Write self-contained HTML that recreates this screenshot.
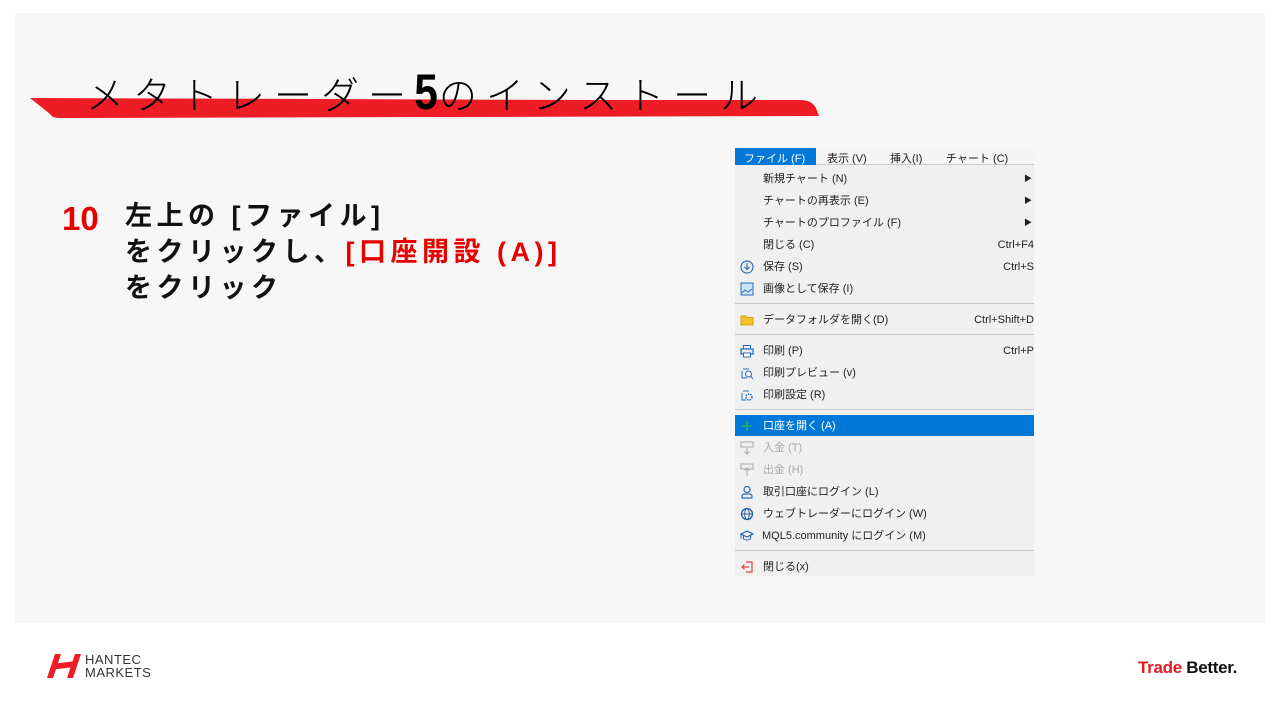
<!DOCTYPE html>
<html><head><meta charset="utf-8"><style>
*{margin:0;padding:0;box-sizing:border-box}
body{width:1280px;height:720px;background:#fff;position:relative;overflow:hidden;font-family:"Liberation Sans","Noto Sans CJK JP",sans-serif}
.panel{position:absolute;left:15px;top:13px;width:1250px;height:610px;background:#f7f7f7}
.title{position:absolute;left:86px;top:64px;font-size:38px;letter-spacing:9px;color:#000;white-space:nowrap;line-height:56px;font-weight:300}
.title b{font-size:50px;font-family:"Liberation Sans",sans-serif;font-weight:bold;letter-spacing:2px;display:inline-block;transform:scaleX(0.85);margin:0 -3px}
.num{position:absolute;left:62px;top:200px;font-size:33px;font-weight:bold;color:#e60000}
.txt{position:absolute;left:125px;top:198px;font-size:27px;font-weight:bold;letter-spacing:4.5px;line-height:36px;color:#111}
.red{color:#e60000}
.menu{position:absolute;left:735px;top:148px;width:299px;height:428px;background:#f0f0f0;font-size:11px;color:#222}
.bar{height:17px;background:#f5f5f5;border-bottom:1px solid #ccc;position:relative}
.bar span{position:absolute;top:2px}
.row{position:absolute;left:0;width:299px;height:22px;line-height:22px}
.row .l{position:absolute;left:28px}
.row .r{position:absolute;right:0}
.row .ar{position:absolute;right:2px;font-size:8px}
.row .ic{position:absolute;left:5px;top:4px;width:14px;height:14px}
.sep{position:absolute;left:0;width:299px;height:1px;background:#c8c8c8}
.dis{color:#aaa}
</style></head><body>
<div class="panel"></div>
<svg style="position:absolute;left:30px;top:96px" width="790" height="24"><path d="M0 2 L560 4 L770 4 Q782 4 786 12 L789 20 L30 22 Q22 22 20 18 Z" fill="#ee1c25"/></svg>
<div class="title">メタトレーダー<b>5</b>のインストール</div>
<div class="num">10</div>
<div class="txt">左上の [ファイル]<br>をクリックし、<span class="red">[口座開設 (A)]</span><br>をクリック</div>

<div class="menu">
<div class="bar"><div style="position:absolute;left:0;top:0;width:81px;height:17px;background:#0078d7"></div>
<span style="left:9px;color:#fff">ファイル (F)</span><span style="left:92px">表示 (V)</span><span style="left:155px">挿入(I)</span><span style="left:211px">チャート (C)</span></div>
<div class="row" style="top:20px"><span class="l">新規チャート (N)</span><span class="ar">▶</span></div>
<div class="row" style="top:42px"><span class="l">チャートの再表示 (E)</span><span class="ar">▶</span></div>
<div class="row" style="top:64px"><span class="l">チャートのプロファイル (F)</span><span class="ar">▶</span></div>
<div class="row" style="top:86px"><span class="l">閉じる (C)</span><span class="r">Ctrl+F4</span></div>
<div class="row" style="top:108px"><svg class="ic" viewBox="0 0 14 14"><circle cx="7" cy="7" r="6" fill="none" stroke="#2a6ebb" stroke-width="1.2"/><path d="M7 3v6M4.5 7l2.5 2.5L9.5 7" fill="none" stroke="#2a6ebb" stroke-width="1.2"/></svg><span class="l">保存 (S)</span><span class="r">Ctrl+S</span></div>
<div class="row" style="top:130px"><svg class="ic" viewBox="0 0 14 14"><rect x="1" y="1" width="12" height="12" fill="#cfe3f7" stroke="#2a6ebb"/><path d="M2 11l3-3 3 2 4-3" fill="none" stroke="#2a6ebb"/></svg><span class="l">画像として保存 (I)</span></div>
<div class="sep" style="top:155px"></div>
<div class="row" style="top:161px"><svg class="ic" viewBox="0 0 14 14"><path d="M1 3h5l1 1.5h6V12H1z" fill="#f2c12e" stroke="#d9a400"/></svg><span class="l">データフォルダを開く(D)</span><span class="r">Ctrl+Shift+D</span></div>
<div class="sep" style="top:186px"></div>
<div class="row" style="top:192px"><svg class="ic" viewBox="0 0 14 14"><rect x="1" y="5" width="12" height="5" fill="none" stroke="#2a6ebb" stroke-width="1.3"/><rect x="3.5" y="1.5" width="7" height="3.5" fill="none" stroke="#2a6ebb"/><rect x="3.5" y="9" width="7" height="4" fill="#fff" stroke="#2a6ebb"/></svg><span class="l">印刷 (P)</span><span class="r">Ctrl+P</span></div>
<div class="row" style="top:214px"><svg class="ic" viewBox="0 0 14 14"><path d="M3 3h6M2 5v7h5" fill="none" stroke="#2a6ebb"/><circle cx="8.5" cy="8" r="3" fill="none" stroke="#2a6ebb"/><path d="M10.5 10l2.5 3" stroke="#2a6ebb"/></svg><span class="l">印刷プレビュー (v)</span></div>
<div class="row" style="top:236px"><svg class="ic" viewBox="0 0 14 14"><path d="M3 3h6M2 5v7h4" fill="none" stroke="#2a6ebb"/><circle cx="9" cy="9" r="3" fill="none" stroke="#2a6ebb" stroke-width="1.5" stroke-dasharray="1.5 1"/></svg><span class="l">印刷設定 (R)</span></div>
<div class="sep" style="top:261px"></div>
<div class="row" style="top:267px;height:21px;background:#0078d7;color:#fff"><svg class="ic" viewBox="0 0 14 14"><path d="M7 2v10M2 7h10" stroke="#2db84a" stroke-width="1.3"/></svg><span class="l">口座を開く (A)</span></div>
<div class="row dis" style="top:289px"><svg class="ic" viewBox="0 0 14 14"><path d="M1 1h12v5H1zM7 6v7M4.5 10.5L7 13l2.5-2.5" fill="none" stroke="#aaa"/></svg><span class="l">入金 (T)</span></div>
<div class="row dis" style="top:311px"><svg class="ic" viewBox="0 0 14 14"><path d="M1 1h12v5H1zM7 13V5M4.5 7.5L7 5l2.5 2.5" fill="none" stroke="#aaa"/></svg><span class="l">出金 (H)</span></div>
<div class="row" style="top:333px"><svg class="ic" viewBox="0 0 14 14"><circle cx="7" cy="4.5" r="3" fill="none" stroke="#2a6ebb" stroke-width="1.2"/><path d="M2 13v-1.5Q2 9 5 9h4q3 0 3 2.5V13z" fill="none" stroke="#2a6ebb" stroke-width="1.2"/></svg><span class="l">取引口座にログイン (L)</span></div>
<div class="row" style="top:355px"><svg class="ic" viewBox="0 0 14 14"><circle cx="7" cy="7" r="5.5" fill="none" stroke="#1f5fa8" stroke-width="1.3"/><ellipse cx="7" cy="7" rx="2.3" ry="5.5" fill="none" stroke="#1f5fa8"/><path d="M1.5 7h11" stroke="#1f5fa8"/></svg><span class="l">ウェブトレーダーにログイン (W)</span></div>
<div class="row" style="top:377px"><svg class="ic" viewBox="0 0 14 14"><path d="M1 5l6-3 6 3-6 3z" fill="none" stroke="#1f5fa8" stroke-width="1.2"/><path d="M3.5 6.5v3.5Q7 12 10.5 10V6.5M1 5v5" fill="none" stroke="#1f5fa8"/></svg><span class="l" style="left:27px">MQL5.community にログイン (M)</span></div>
<div class="sep" style="top:402px"></div>
<div class="row" style="top:408px"><svg class="ic" viewBox="0 0 14 14"><path d="M6 2h6v10H6M9 7H2M4.5 4.5L2 7l2.5 2.5" fill="none" stroke="#e0404a" stroke-width="1.2"/></svg><span class="l">閉じる(x)</span></div>
</div>

<svg style="position:absolute;left:47px;top:654px" width="36" height="24" viewBox="0 0 36 24"><path d="M8 0h6L6 24H0z M28 0h6l-8 24h-6z M5 10l24 -3 -2 6 -24 3z" fill="#ee1c25"/></svg>
<div style="position:absolute;left:85px;top:653px;font-size:13px;line-height:13px;color:#333;letter-spacing:0.5px">HANTEC<br>MARKETS</div>
<div style="position:absolute;left:1138px;top:658px;font-size:17px;font-weight:bold;letter-spacing:-0.3px"><span style="color:#e31b23">Trade</span> <span style="color:#111">Better.</span></div>
</body></html>
